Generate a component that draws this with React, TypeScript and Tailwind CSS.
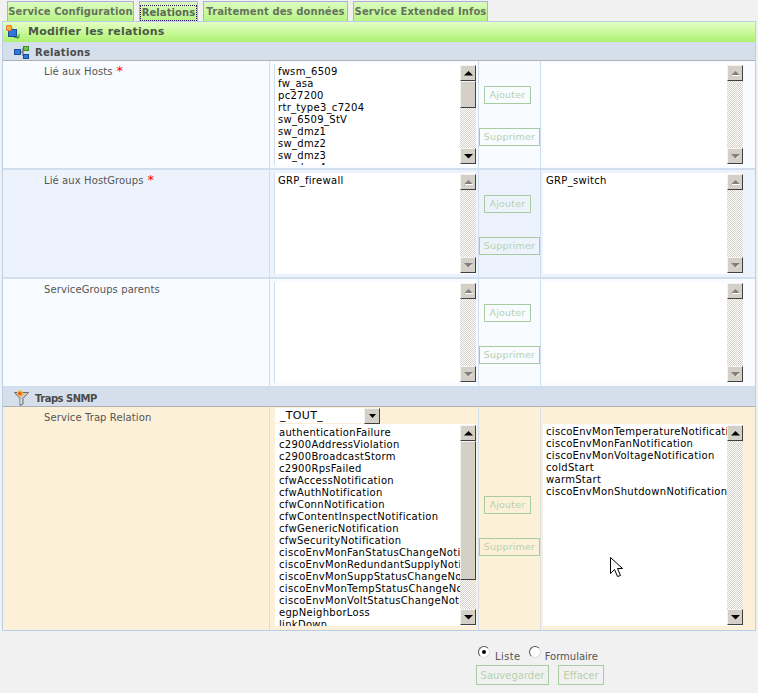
import React from 'react';

const font = "font-['DejaVu_Sans',sans-serif]";

const Arrow = ({ dir, disabled }: { dir: 'up' | 'down'; disabled?: boolean }) => (
  <svg width="9" height="5" viewBox="0 0 9 5" className="block">
    {dir === 'up' ? (
      <>
        <path d="M4.5 0 L9 4.5 H0 Z" fill={disabled ? '#808080' : '#000'} />
        {disabled && <path d="M1 4.5h8" stroke="#fff" strokeWidth="1" />}
      </>
    ) : (
      <>
        <path d="M0 0 H9 L4.5 4.5 Z" fill={disabled ? '#808080' : '#000'} />
        {disabled && <path d="M5 4.5 L8 1.5" stroke="#fff" strokeWidth="1" />}
      </>
    )}
  </svg>
);

const bevel =
  'bg-[#d4d0c8] border-t border-l border-t-[#f4f3f0] border-l-[#f4f3f0] border-r border-b border-r-[#404040] border-b-[#404040]';

const ScrollButton = ({ dir, disabled }: { dir: 'up' | 'down'; disabled?: boolean }) => (
  <div className={`${bevel} w-4 h-4 flex items-center justify-center shrink-0`}>
    <Arrow dir={dir} disabled={disabled} />
  </div>
);

const ScrollBar = ({ active, thumbSize = 0 }: { active?: boolean; thumbSize?: number }) => (
  <div className="w-4 shrink-0 flex flex-col self-stretch py-[1px]">
    <ScrollButton dir="up" disabled={!active} />
    {thumbSize > 0 && <div className={`${bevel} w-4 shrink-0`} style={{ height: thumbSize }} />}
    <div className="flex-1 bg-[repeating-conic-gradient(#d4d0c8_0_25%,#fff_0_50%)] bg-[length:2px_2px]" />
    <ScrollButton dir="down" disabled={!active} />
  </div>
);

const ListBox = ({
  items,
  active,
  thumbSize,
  width,
  clipWidth,
  pad = 'pl-[3px] pt-[2px]',
}: {
  items: string[];
  active?: boolean;
  thumbSize?: number;
  width: string;
  clipWidth: string;
  pad?: string;
}) => (
  <div className={`flex bg-white h-full ${width}`}>
    <div className={`${clipWidth} h-full overflow-hidden ${pad}`}>
      {items.map((t) => (
        <div key={t} className="text-[10px] leading-[12px] h-3 text-black whitespace-nowrap tracking-[0.3px]">
          {t}
        </div>
      ))}
    </div>
    <ScrollBar active={active} thumbSize={thumbSize} />
  </div>
);

const FormButton = ({ label, className = '' }: { label: string; className?: string }) => (
  <button className={`border border-[#a8cba0] text-[#b5d2ad] text-[9.5px] leading-[14px] tracking-[0.2px] ${className}`}>
    {label}
  </button>
);

const MoveButtons = ({ tall }: { tall?: boolean }) => (
  <div className={`flex flex-col items-start w-[63px] shrink-0 border-l border-r border-[#d0deee] gap-[24px] ${tall ? 'pt-[89px]' : 'pt-[25px] pb-[3px]'}`}>
    <FormButton label="Ajouter" className="w-[47px] h-[18px] ml-[5px]" />
    <FormButton label="Supprimer" className="w-[61px] h-[18px] ml-0" />
  </div>
);

const labelCol =
  'w-[267px] shrink-0 border-r border-[#d0deee] pl-[41px] pt-[4px] text-[10px] leading-[14px] text-[#555] tracking-[0.1px]';

const Row = ({
  label,
  required,
  left,
  right,
  bg,
}: {
  label: string;
  required?: boolean;
  left: string[];
  right: string[];
  bg: string;
}) => (
  <div className={`flex h-[109px] border-b-2 border-[#d0deee] ${bg}`}>
    <div className={labelCol}>
      {label}
      {required && <span className="text-[#f00] text-[13px] leading-[10px] ml-1">*</span>}
    </div>
    <div className="w-[208px] shrink-0 pl-[4px] py-[3px]">
      <ListBox
        items={left}
        active={left.length > 8}
        thumbSize={left.length > 8 ? 27 : 0}
        width="w-[202px] border-l border-[#d0deee]"
        clipWidth="w-[185px]"
      />
    </div>
    <MoveButtons />
    <div className="w-[202px] shrink-0 pl-[2px] py-[3px]">
      <ListBox items={right} width="w-[200px]" clipWidth="w-[184px]" />
    </div>
  </div>
);

const SectionHeader = ({ icon, title, titleClass }: { icon: React.ReactNode; title: string; titleClass: string }) => (
  <div className="flex items-center h-[19px] bg-[#d5dfeb] border-b border-[#b0b0b0] pl-[11px] pt-[2px] gap-[6px]">
    {icon}
    <span className={`font-bold text-[10px] text-[#4a4a4a] leading-none mt-[2px] ${titleClass}`}>{title}</span>
  </div>
);

const RelationsIcon = () => (
  <svg width="15" height="13" viewBox="0 0 15 13">
    <path d="M7 6H9M9 2V10M9 2H10M9 10H10" stroke="#555" fill="none" />
    <rect x="0.5" y="3.5" width="6" height="5" fill="#2d78d8" stroke="#1b4c9c" />
    <rect x="9.5" y="0.5" width="5" height="4" fill="#6cc24a" stroke="#3c8a2c" />
    <rect x="9.5" y="8.5" width="5" height="4" fill="#2d78d8" stroke="#1b4c9c" />
  </svg>
);

const FunnelIcon = () => (
  <svg width="15" height="16" viewBox="0 0 15 16">
    <path d="M0.5 2.5H14.5L9 8.5V14L6 15.5V8.5Z" fill="#c8c8c8" stroke="#6e6e6e" />
    <path d="M7 9V14" stroke="#f2f2f2" />
    <circle cx="6" cy="3.5" r="3" fill="#f6b040" />
    <circle cx="6" cy="3.5" r="1.5" fill="#e8481c" />
  </svg>
);

const HeaderIcon = () => (
  <svg width="14" height="14" viewBox="0 0 14 14">
    <rect x="2.5" y="4.5" width="8" height="7" fill="#2d78d8" stroke="#1b4c9c" />
    <circle cx="3" cy="3" r="3" fill="#f6b040" stroke="#e05030" strokeWidth="0.8" />
    <path d="M8 12.5H13M11 10.5L13 12.5L11 13.5M13 9V12" stroke="#3ca030" fill="none" />
  </svg>
);

const Cursor = () => (
  <svg width="14" height="21" viewBox="0 0 14 21" className="absolute left-[69px] top-[150px]">
    <path d="M0.5 0.5V16.5L4.5 12.5L7.5 19.5L10.5 18.5L7.5 11.5H12.5Z" fill="#fff" stroke="#000" />
  </svg>
);

const Tab = ({ label, active, width }: { label: string; active?: boolean; width: string }) => (
  <div className={`h-[20px] ${width} border border-b-0 border-[#a9b0e0] bg-gradient-to-b from-[#dcfbc0] to-[#b8f484] text-[#63745a] font-bold text-[10px] tracking-[0.1px] whitespace-nowrap flex items-center justify-center`}>
    <span className={active ? 'border border-dotted border-[#301060] px-px leading-[14px] mt-[2px] text-[#5a6a55]' : ''}>{label}</span>
  </div>
);

const hosts = ['fwsm_6509', 'fw_asa', 'pc27200', 'rtr_type3_c7204', 'sw_6509_StV', 'sw_dmz1', 'sw_dmz2', 'sw_dmz3', 'sw_dmz4'];

const trapsLeft = [
  'authenticationFailure',
  'c2900AddressViolation',
  'c2900BroadcastStorm',
  'c2900RpsFailed',
  'cfwAccessNotification',
  'cfwAuthNotification',
  'cfwConnNotification',
  'cfwContentInspectNotification',
  'cfwGenericNotification',
  'cfwSecurityNotification',
  'ciscoEnvMonFanStatusChangeNotif',
  'ciscoEnvMonRedundantSupplyNotif',
  'ciscoEnvMonSuppStatusChangeNotif',
  'ciscoEnvMonTempStatusChangeNotif',
  'ciscoEnvMonVoltStatusChangeNotif',
  'egpNeighborLoss',
  'linkDown',
];

const trapsRight = [
  'ciscoEnvMonTemperatureNotification',
  'ciscoEnvMonFanNotification',
  'ciscoEnvMonVoltageNotification',
  'coldStart',
  'warmStart',
  'ciscoEnvMonShutdownNotification',
];

const Radio = ({ checked }: { checked?: boolean }) => (
  <span className="w-[12px] h-[12px] rounded-full bg-white border border-[#555] border-b-[#ddd] border-r-[#ddd] flex items-center justify-center">
    {checked && <span className="w-1 h-1 rounded-full bg-black" />}
  </span>
);

export default function App() {
  return (
    <div className={`${font} w-[758px] h-[693px] bg-[#f1f1f1] overflow-hidden`}>
      <div className="flex items-start gap-[5px] pl-[7px] pt-[1px] h-[21px]">
        <Tab label="Service Configuration" width="w-[127px]" />
        <Tab label="Relations" active width="w-[59px]" />
        <Tab label="Traitement des données" width="w-[145px]" />
        <Tab label="Service Extended Infos" width="w-[135px]" />
      </div>
      <div className="ml-[2px] w-[754px] border border-[#b8cfe8]">
        <div className="flex items-center h-[20px] bg-gradient-to-b from-[#e4ffc4] to-[#aef26e] pl-[3px] gap-[8px]">
          <HeaderIcon />
          <span className="font-bold text-[11px] text-[#4a5a44] tracking-[0.2px] mt-[1px]">Modifier les relations</span>
        </div>
        <SectionHeader icon={<RelationsIcon />} title="Relations" titleClass="tracking-[0.3px]" />
        <Row label="Lié aux Hosts" required left={hosts} right={[]} bg="bg-[#f8fbff]" />
        <Row label="Lié aux HostGroups" required left={['GRP_firewall']} right={['GRP_switch']} bg="bg-[#ecf3fd]" />
        <Row label="ServiceGroups parents" left={[]} right={[]} bg="bg-[#f8fbff]" />
        <SectionHeader icon={<FunnelIcon />} title="Traps SNMP" titleClass="tracking-[-0.5px]" />
        <div className="flex h-[223px] bg-[#fdf0d8]">
          <div className={labelCol}>Service Trap Relation</div>
          <div className="w-[208px] shrink-0 pl-[5px] flex flex-col">
            <div className="h-[16px] flex items-start mt-[1px]">
              <div className="w-[89px] h-[15px] bg-white text-[11px] leading-[15px] pl-[5px] tracking-[0.3px] text-black">_TOUT_</div>
              <div className={`${bevel} w-[16px] h-[16px] flex items-center justify-center`}>
                <svg width="7" height="4" viewBox="0 0 7 4"><path d="M0 0H7L3.5 4Z" fill="#000" /></svg>
              </div>
            </div>
            <div className="h-[202px]">
              <ListBox items={trapsLeft} active thumbSize={139} width="w-[201px]" clipWidth="w-[185px]" pad="pl-[4px] pt-[3px]" />
            </div>
          </div>
          <MoveButtons tall />
          <div className="relative w-[202px] shrink-0 pl-[2px] pt-[17px] pb-[4px]">
            <ListBox items={trapsRight} active width="w-[200px]" clipWidth="w-[184px]" />
            <Cursor />
          </div>
        </div>
      </div>
      <div className="pl-[478px] pt-[12px] text-[10px] text-[#555]">
        <div className="flex items-center h-[17px]">
          <Radio checked />
          <span className="ml-[5px] mr-[8px] mt-[9px] tracking-[0.4px]">Liste</span>
          <Radio />
          <span className="ml-[4px] mt-[9px]">Formulaire</span>
        </div>
        <div className="flex gap-[9px] mt-[5px] -ml-[2px]">
          <button className="h-[20px] w-[73px] border border-[#a8cba0] text-[#b5d2ad] text-[10px]">Sauvegarder</button>
          <button className="h-[20px] w-[46px] border border-[#a8cba0] text-[#b5d2ad] text-[10px]">Effacer</button>
        </div>
      </div>
    </div>
  );
}
